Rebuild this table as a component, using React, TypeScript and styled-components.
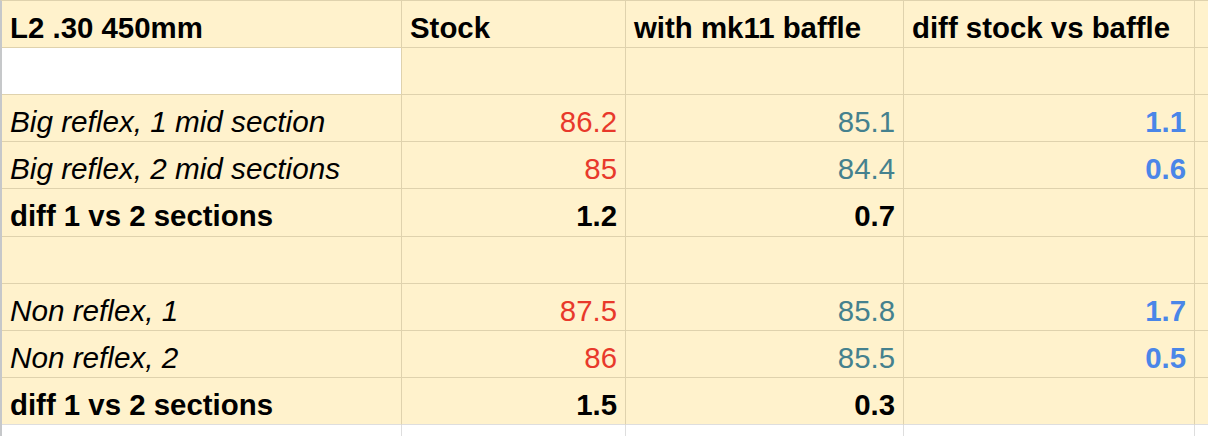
import React from "react";
import styled, { createGlobalStyle, css } from "styled-components";

const Global = createGlobalStyle`
  html, body { margin: 0; padding: 0; background: #ffffff; }
  body { font-family: "Liberation Sans", Arial, sans-serif; }
`;

const YELLOW = "#fff2cc";
const TAN = "#dfd2ad";
const GRAY = "#dedede";

const COLS = "400px 224px 278px 291px 1fr";

const Sheet = styled.div`
  display: flex;
  flex-direction: column;
  width: 1208px;
  height: 436px;
  overflow: hidden;
  border-left: 2px solid #c6c8ca;
  box-sizing: border-box;
  border-top: 1px solid ${TAN};
`;

const Row = styled.div<{ $h: number }>`
  display: grid;
  grid-template-columns: ${COLS};
  height: ${(p) => p.$h}px;
  flex: none;
`;

type Tone = "plain" | "red" | "teal" | "blue";

const toneColor: Record<Tone, string> = {
  plain: "#000000",
  red: "#e8392b",
  teal: "#45818e",
  blue: "#4a86e8",
};

const Cell = styled.div<{
  $right?: boolean;
  $bold?: boolean;
  $italic?: boolean;
  $tone?: Tone;
  $white?: boolean;
  $lastYellow?: boolean;
  $blank?: boolean;
}>`
  box-sizing: border-box;
  background: ${(p) => (p.$white ? "#ffffff" : YELLOW)};
  border-right: 1px solid ${TAN};
  border-bottom: 1px solid ${(p) => (p.$lastYellow ? GRAY : TAN)};
  padding: 11px 8px 0 8px;
  font-size: ${(p) => (p.$italic ? "29.7px" : "29.4px")};
  line-height: 32px;
  white-space: nowrap;
  overflow: hidden;
  text-align: ${(p) => (p.$right ? "right" : "left")};
  font-weight: ${(p) => (p.$bold ? 700 : 400)};
  font-style: ${(p) => (p.$italic ? "italic" : "normal")};
  color: ${(p) => toneColor[p.$tone ?? "plain"]};
  ${(p) =>
    p.$blank &&
    css`
      background: #ffffff;
      border-right-color: ${GRAY};
      border-bottom: none;
    `}
`;

type CellData = {
  text?: string;
  right?: boolean;
  bold?: boolean;
  italic?: boolean;
  tone?: Tone;
  white?: boolean;
};

type RowData = { h: number; cells: CellData[]; last?: boolean };

const num = (text: string, tone: Tone, bold = false): CellData => ({
  text,
  right: true,
  tone,
  bold,
});

const rows: RowData[] = [
  {
    h: 47,
    cells: [
      { text: "L2 .30 450mm", bold: true },
      { text: "Stock", bold: true },
      { text: "with mk11 baffle", bold: true },
      { text: "diff stock vs baffle", bold: true },
      {},
    ],
  },
  { h: 47, cells: [{ white: true }, {}, {}, {}, {}] },
  {
    h: 47,
    cells: [
      { text: "Big reflex, 1 mid section", italic: true },
      num("86.2", "red"),
      num("85.1", "teal"),
      num("1.1", "blue", true),
      {},
    ],
  },
  {
    h: 47,
    cells: [
      { text: "Big reflex, 2 mid sections", italic: true },
      num("85", "red"),
      num("84.4", "teal"),
      num("0.6", "blue", true),
      {},
    ],
  },
  {
    h: 48,
    cells: [
      { text: "diff 1 vs 2 sections", bold: true },
      num("1.2", "plain", true),
      num("0.7", "plain", true),
      {},
      {},
    ],
  },
  { h: 47, cells: [{}, {}, {}, {}, {}] },
  {
    h: 47,
    cells: [
      { text: "Non reflex, 1", italic: true },
      num("87.5", "red"),
      num("85.8", "teal"),
      num("1.7", "blue", true),
      {},
    ],
  },
  {
    h: 47,
    cells: [
      { text: "Non reflex, 2", italic: true },
      num("86", "red"),
      num("85.5", "teal"),
      num("0.5", "blue", true),
      {},
    ],
  },
  {
    h: 47,
    last: true,
    cells: [
      { text: "diff 1 vs 2 sections", bold: true },
      num("1.5", "plain", true),
      num("0.3", "plain", true),
      {},
      {},
    ],
  },
];

export default function App() {
  return (
    <>
      <Global />
      <Sheet>
        {rows.map((r, i) => (
          <Row key={i} $h={r.h}>
            {r.cells.map((c, j) => (
              <Cell
                key={j}
                $right={c.right}
                $bold={c.bold}
                $italic={c.italic}
                $tone={c.tone}
                $white={c.white}
                $lastYellow={r.last}
              >
                {c.text}
              </Cell>
            ))}
          </Row>
        ))}
        <Row $h={47}>
          {[0, 1, 2, 3, 4].map((k) => (
            <Cell key={k} $blank />
          ))}
        </Row>
      </Sheet>
    </>
  );
}
